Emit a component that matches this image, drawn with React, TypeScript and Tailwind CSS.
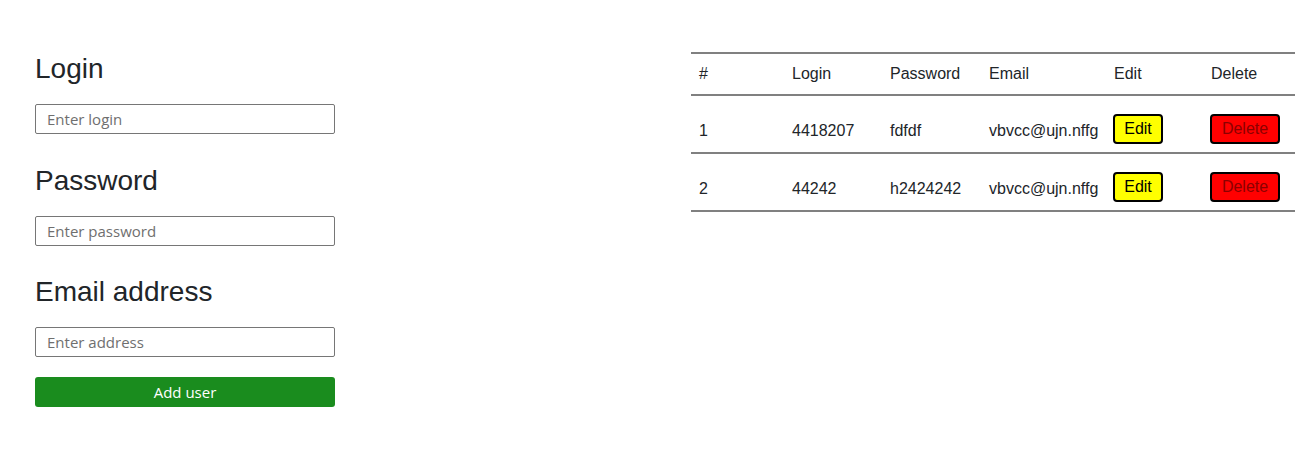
import React from "react";

const rows = [
  { id: 1, login: "4418207", password: "fdfdf", email: "vbvcc@ujn.nffg" },
  { id: 2, login: "44242", password: "h2424242", email: "vbvcc@ujn.nffg" },
];

const cols = ["w-[93px]", "w-[98px]", "w-[99px]", "w-[125px]", "w-[97px]", "w-[92px]"];

function Field({ label, placeholder, last }: { label: string; placeholder: string; last?: boolean }) {
  return (
    <div className={last ? "" : "mb-[29.5px]"}>
      <h3 className="h-[33.5px] mb-[18.5px] text-[28px] leading-[33.5px] text-[#212529] font-['Liberation_Sans',Arial,sans-serif]">
        {label}
      </h3>
      <input
        placeholder={placeholder}
        className="block w-[300px] h-[30px] border border-[#767676] rounded-[2px] pl-[11px] text-[15px] font-['Open_Sans',sans-serif] text-[#212529] placeholder:text-[#6f6f6f] outline-none"
      />
    </div>
  );
}

export default function App() {
  return (
    <div className="w-[1295px] h-[462px] bg-white flex overflow-hidden">
      <div className="ml-[35px] pt-[52px] w-[300px]">
        <Field label="Login" placeholder="Enter login" />
        <Field label="Password" placeholder="Enter password" />
        <Field label="Email address" placeholder="Enter address" last />
        <button className="mt-[20px] block w-[300px] h-[30px] bg-[#1a8c1e] rounded-[3px] text-white text-[15px] font-['Open_Sans',sans-serif]">
          Add user
        </button>
      </div>
      <div className="ml-auto mt-[52px] w-[604px] font-['Liberation_Sans',Arial,sans-serif] text-[16px] text-[#212529]">
        <div className="flex h-[44px] border-t-2 border-b-2 border-[#808080] items-center">
          {["#", "Login", "Password", "Email", "Edit", "Delete"].map((h, i) => (
            <div key={h} className={`${cols[i]} pl-[8px] leading-[24px]`}>
              {h}
            </div>
          ))}
        </div>
        {rows.map((r) => (
          <div key={r.id} className="flex h-[58px] border-b-2 border-[#808080]">
            <div className={`${cols[0]} pl-[8px] pt-[23px] leading-[24px]`}>{r.id}</div>
            <div className={`${cols[1]} pl-[8px] pt-[23px] leading-[24px]`}>{r.login}</div>
            <div className={`${cols[2]} pl-[8px] pt-[23px] leading-[24px]`}>{r.password}</div>
            <div className={`${cols[3]} pl-[8px] pt-[23px] leading-[24px]`}>{r.email}</div>
            <div className={`${cols[4]} pl-[7px] pt-[18px]`}>
              <button className="w-[50px] h-[30px] border-2 border-black rounded-[4px] bg-[#ffff00] text-black text-[16px] leading-[18px] pb-[1px]">
                Edit
              </button>
            </div>
            <div className={`${cols[5]} pl-[7px] pt-[18px]`}>
              <button className="w-[70px] h-[30px] border-2 border-black rounded-[4px] bg-[#ff0000] text-[#8b0000] text-[16px] leading-[18px] pb-[1px]">
                Delete
              </button>
            </div>
          </div>
        ))}
      </div>
    </div>
  );
}
